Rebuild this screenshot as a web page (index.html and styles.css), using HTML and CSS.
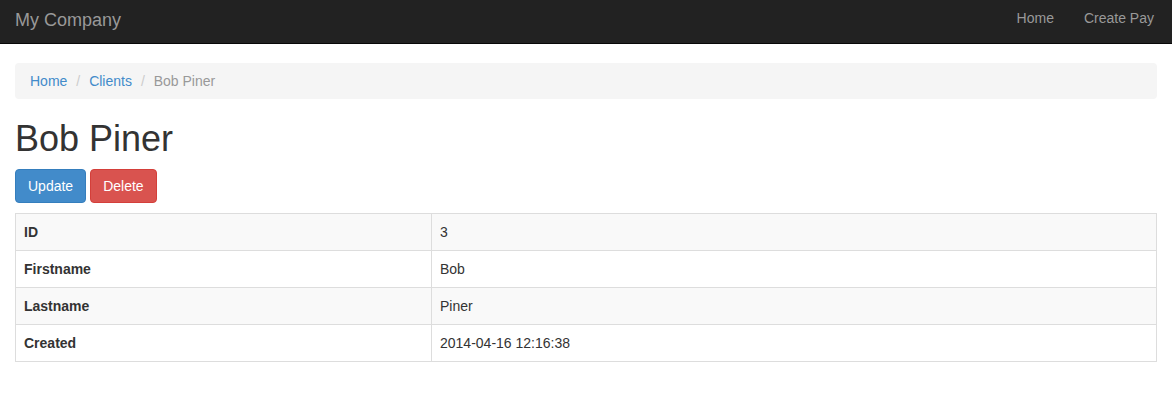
FILE: index.html
```html
<!DOCTYPE html>
<html>
<head>
<meta charset="utf-8">
<title>Bob Piner</title>
<link rel="stylesheet" href="styles.css">
</head>
<body>
<nav class="navbar">
  <a class="brand" href="#">My Company</a>
  <ul class="nav">
    <li><a href="#">Home</a></li>
    <li><a href="#">Create Pay</a></li>
  </ul>
</nav>
<div class="container">
  <ul class="breadcrumb">
    <li><a href="#">Home</a></li>
    <li><a href="#">Clients</a></li>
    <li class="active">Bob Piner</li>
  </ul>
  <h1>Bob Piner</h1>
  <p class="actions">
    <a class="btn btn-primary" href="#">Update</a>
    <a class="btn btn-danger" href="#">Delete</a>
  </p>
  <table class="detail">
    <colgroup><col class="col-label"><col></colgroup>
    <tr><th>ID</th><td>3</td></tr>
    <tr><th>Firstname</th><td>Bob</td></tr>
    <tr><th>Lastname</th><td>Piner</td></tr>
    <tr><th>Created</th><td>2014-04-16 12:16:38</td></tr>
  </table>
</div>
</body>
</html>
```

FILE: styles.css
```css
* { box-sizing: border-box; }
html, body { margin: 0; padding: 0; }
body {
  font-family: "Liberation Sans", Arial, Helvetica, sans-serif;
  font-size: 14px;
  line-height: 20px;
  color: #333;
  background: #fff;
}
a { text-decoration: none; }

.navbar {
  height: 44px;
  background: #222;
  border-bottom: 1px solid #080808;
  display: flex;
  justify-content: space-between;
  padding: 0 0 0 15px;
}
.brand {
  color: #999;
  font-size: 18px;
  line-height: 20px;
  padding-top: 10px;
}
.nav {
  list-style: none;
  margin: 0;
  padding: 0 3px 0 0;
  display: flex;
}
.nav a {
  display: block;
  color: #999;
  padding: 8px 15px;
  line-height: 20px;
}

.container {
  padding: 0 15px;
}
.breadcrumb {
  list-style: none;
  margin: 19px 0 20px;
  padding: 8px 15px;
  background: #f5f5f5;
  border-radius: 4px;
  display: flex;
}
.breadcrumb li + li::before {
  content: "/\00a0";
  color: #ccc;
  padding: 0 5px 0 9px;
}
.breadcrumb a { color: #428bca; }
.breadcrumb .active { color: #999; }

h1 {
  font-size: 36px;
  font-weight: 500;
  line-height: 1.1;
  margin: 20px 0 10px;
}
.actions {
  margin: 0 0 10px;
  display: flex;
  gap: 4px;
}
.btn {
  display: inline-block;
  padding: 6px 12px;
  font-size: 14px;
  line-height: 20px;
  border: 1px solid transparent;
  border-radius: 4px;
  color: #fff;
}
.btn-primary { background: #428bca; border-color: #357ebd; }
.btn-danger { background: #d9534f; border-color: #d43f3a; }

.detail {
  width: 100%;
  border-collapse: collapse;
  border: 1px solid #ddd;
}
.col-label { width: 416px; }
.detail th, .detail td {
  border: 1px solid #ddd;
  padding: 8px;
  line-height: 20px;
  text-align: left;
  vertical-align: top;
}
.detail th { font-weight: bold; }
.detail tr:nth-child(odd) { background: #f9f9f9; }
```
